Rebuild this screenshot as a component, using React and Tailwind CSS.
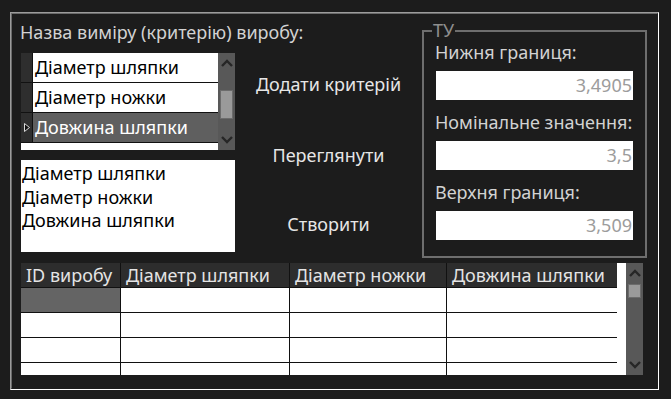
import React from 'react';

const font = { fontFamily: '"Noto Sans", "Open Sans", sans-serif' };

const Chevron = ({ up }) => (
  <svg width="12" height="8" viewBox="0 0 12 8" className="block">
    <path
      d={up ? 'M1 7 L6 2 L11 7' : 'M1 1 L6 6 L11 1'}
      fill="none"
      stroke="#262626"
      strokeWidth="2.4"
    />
  </svg>
);

const ScrollBar = ({ thumbTop, thumbHeight }) => (
  <div className="w-[17px] h-full bg-[#585858] flex flex-col items-center justify-between py-[6px]">
    <Chevron up />
    <div className="flex-1 w-full flex flex-col items-center">
      <div style={{ marginTop: thumbTop, height: thumbHeight }} className="w-[13px] bg-[#9a9a9a] border border-[#6c6c6c]" />
    </div>
    <Chevron />
  </div>
);

const criteria = ['Діаметр шляпки', 'Діаметр ножки', 'Довжина шляпки'];

const CriteriaGrid = () => (
  <div className="w-[214px] h-[97px] flex bg-white">
    <div className="w-[197px] flex flex-col">
      {criteria.map((c, i) => {
        const sel = i === 2;
        return (
          <div key={c} className="flex h-[30px] border-b border-[#111]">
            <div className="w-[12px] bg-[#2e2e2e] border-r border-[#111] flex items-center justify-center">
              {sel && (
                <svg width="6" height="9" viewBox="0 0 6 9">
                  <polygon points="0.5,0.5 5.5,4.5 0.5,8.5" fill="#111" stroke="#d8d8d8" strokeWidth="1" />
                </svg>
              )}
            </div>
            <div className={`flex-1 pl-[2px] text-[18px] leading-[29px] whitespace-nowrap ${sel ? 'bg-[#5f5f5f] text-white' : 'bg-white text-black'}`}>
              {c}
            </div>
          </div>
        );
      })}
      <div className="flex-1 bg-white" />
    </div>
    <ScrollBar thumbTop={23} thumbHeight={29} />
  </div>
);

const Field = ({ label, value }) => (
  <div className="flex flex-col">
    <div className="text-[18px] leading-[22px] text-[#d2d2d2] whitespace-nowrap">{label}</div>
    <div className="mt-[8px] ml-[1px] w-[197px] h-[29px] bg-white text-right pr-[1px] text-[18px] leading-[29px] text-[#9c9c9c]">
      {value}
    </div>
  </div>
);

const cols = [
  { name: 'ID виробу', w: 'w-[100px]' },
  { name: 'Діаметр шляпки', w: 'w-[169px]' },
  { name: 'Діаметр ножки', w: 'w-[157px]' },
  { name: 'Довжина шляпки', w: 'w-[170px]' },
];

const ResultTable = () => (
  <div className="flex h-[112px]">
    <div className="w-[605px] bg-white flex">
      <div className="w-[596px] flex flex-col">
        <div className="flex h-[25px] bg-[#2d2d2d] border-b border-[#111]">
          {cols.map((c, i) => (
            <div
              key={c.name}
              className={`${c.w} pl-[5px] text-[18px] leading-[24px] text-[#e4e4e4] whitespace-nowrap overflow-hidden ${i < 3 ? 'border-r border-[#111]' : ''}`}
            >
              {c.name}
            </div>
          ))}
        </div>
        {[0, 1, 2, 3].map((r) => (
          <div key={r} className={`flex ${r < 3 ? 'h-[25px] border-b border-[#111]' : 'flex-1'}`}>
            {cols.map((c, i) => (
              <div
                key={c.name}
                className={`${c.w} ${r === 0 && i === 0 ? 'bg-[#646464]' : 'bg-white'} ${i < 3 ? 'border-r border-[#111]' : ''}`}
              />
            ))}
          </div>
        ))}
      </div>
      <div className="flex-1 bg-white" />
    </div>
    <ScrollBar thumbTop={7} thumbHeight={14} />
  </div>
);

export default function App() {
  return (
    <div style={font} className="w-[671px] h-[399px] bg-[#1c1c1c] pt-[12px] pl-[10px]">
      <div className="w-[649px] h-[378px] border-t border-l border-[#9c9c9c] border-b border-r border-b-white border-r-white">
        <div className="w-full h-full border-t border-l border-[#6a6a6a] border-b border-r border-b-[#1c1c1c] border-r-[#1c1c1c] pl-[9px]">
          <div className="flex">
            <div className="w-[214px] flex flex-col">
              <div className="mt-[7px] -ml-[1px] text-[18px] leading-[22px] text-[#d2d2d2] whitespace-nowrap">
                Назва виміру (критерію) виробу:
              </div>
              <div className="mt-[10px]">
                <CriteriaGrid />
              </div>
              <div className="mt-[10px] w-[214px] h-[92px] bg-white pt-[2px] pl-[1px] text-[18px] leading-[23.5px] text-black">
                {criteria.map((c) => (
                  <div key={c}>{c}</div>
                ))}
              </div>
            </div>
            <div className="w-[187px] flex flex-col items-center text-[18px] leading-[22px] text-[#e6e6e6]">
              <div className="mt-[59px]">Додати критерій</div>
              <div className="mt-[49px]">Переглянути</div>
              <div className="mt-[47px]">Створити</div>
            </div>
            <div className="relative mt-[16px] w-[225px] h-[228px] border-2 border-[#6e6e6e] pl-[11px] pt-[9px] flex flex-col gap-[11px]">
              <div className="absolute -top-[10px] left-[8px] px-[1px] bg-[#1c1c1c] text-[18px] leading-[17px] text-[#8e8e8e]">
                ТУ
              </div>
              <Field label="Нижня границя:" value="3,4905" />
              <Field label="Номінальне значення:" value="3,5" />
              <Field label="Верхня границя:" value="3,509" />
            </div>
          </div>
          <div className="mt-[5px]">
            <ResultTable />
          </div>
        </div>
      </div>
    </div>
  );
}
